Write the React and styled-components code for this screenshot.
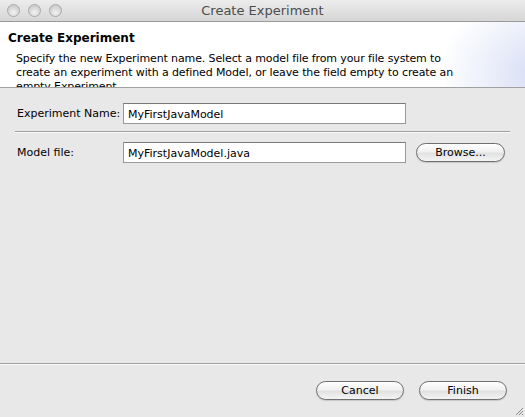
import React from "react";
import styled, { createGlobalStyle } from "styled-components";

const FONT = `"DejaVu Sans", "Liberation Sans", sans-serif`;

const GlobalStyle = createGlobalStyle`
  html, body {
    margin: 0;
    padding: 0;
    background: #e8e8e8;
  }
  body {
    font-family: ${FONT};
    color: #000;
  }
`;

const Window = styled.div`
  width: 525px;
  height: 417px;
  display: flex;
  flex-direction: column;
  background: #e8e8e8;
  overflow: hidden;
  position: relative;
`;

const TitleBar = styled.div`
  height: 21px;
  flex: none;
  display: flex;
  align-items: center;
  position: relative;
  background: linear-gradient(#ececec, #d6d6d6);
  border-bottom: 1px solid #9a9a9a;
`;

const Lights = styled.div`
  display: flex;
  gap: 8px;
  padding-left: 7px;
`;

const Light = styled.span`
  width: 13px;
  height: 13px;
  border-radius: 50%;
  box-sizing: border-box;
  border: 1px solid #a9a9a9;
  background: radial-gradient(circle at 50% 70%, #f2f2f2, #cfcfcf 70%);
`;

const Title = styled.div`
  position: absolute;
  left: 0;
  right: 0;
  text-align: center;
  font-size: 13px;
  color: #4d4d4d;
  top: 3px;
`;

const Header = styled.div`
  height: 66px;
  flex: none;
  background: #fff;
  border-bottom: 1px solid #a0a0a0;
  position: relative;
  overflow: hidden;
  padding: 9px 0 0 8px;
  box-sizing: border-box;
`;

const HeaderArt = styled.div`
  position: absolute;
  right: -60px;
  top: -30px;
  width: 140px;
  height: 150px;
  border-radius: 50%;
  background: radial-gradient(
    ellipse at 80% 55%,
    rgba(200, 210, 240, 0.9),
    rgba(225, 230, 248, 0.6) 45%,
    rgba(255, 255, 255, 0) 75%
  );
`;

const HeaderTitle = styled.div`
  font-size: 12px;
  font-weight: bold;
  line-height: 15px;
  position: relative;
`;

const HeaderText = styled.div`
  margin: 6px 0 0 8px;
  font-size: 11px;
  line-height: 14px;
  letter-spacing: -0.12px;
  white-space: nowrap;
  position: relative;
`;

const Body = styled.div`
  flex: 1;
  display: flex;
  flex-direction: column;
  padding: 15px 15px 0 17px;
`;

const Row = styled.div`
  display: flex;
  align-items: center;
  height: 21px;
`;

const Label = styled.label`
  width: 106px;
  font-size: 11px;
  flex: none;
`;

const Input = styled.input`
  width: 283px;
  height: 21px;
  box-sizing: border-box;
  border: 1px solid #9a9a9a;
  border-top-color: #7a7a7a;
  background: #fff;
  font-family: ${FONT};
  font-size: 11px;
  padding: 1px 4px 0;
  margin: 0;
  outline: none;
`;

const Separator = styled.hr`
  border: none;
  border-top: 1px solid #9d9d9d;
  border-bottom: 1px solid #fafafa;
  margin: ${(p) => p.$margin || "7px 0 9px -2px"};
`;

const PillButton = styled.button`
  height: 19px;
  width: ${(p) => p.$width || 88}px;
  border-radius: 10px;
  border: 1px solid #6f6f6f;
  background: linear-gradient(#ffffff, #f1f1f1 45%, #e2e2e2 55%, #f4f4f4);
  font-family: ${FONT};
  font-size: 11px;
  color: #000;
  padding: 0;
  margin-left: ${(p) => p.$gap || 0}px;
  box-shadow: 0 1px 1px rgba(0, 0, 0, 0.15);
`;

const Footer = styled.div`
  height: 52px;
  flex: none;
  display: flex;
  justify-content: flex-end;
  align-items: flex-start;
  padding: 16px 18px 0 0;
  box-sizing: border-box;
  position: relative;
`;

const Grip = styled.svg`
  position: absolute;
  right: 1px;
  bottom: 1px;
`;

export default function App() {
  return (
    <Window>
      <GlobalStyle />
      <TitleBar>
        <Lights>
          <Light />
          <Light />
          <Light />
        </Lights>
        <Title>Create Experiment</Title>
      </TitleBar>
      <Header>
        <HeaderArt />
        <HeaderTitle>Create Experiment</HeaderTitle>
        <HeaderText>
          Specify the new Experiment name. Select a model file from your file system to
          <br />
          create an experiment with a defined Model, or leave the field empty to create an
          <br />
          empty Experiment.
        </HeaderText>
      </Header>
      <Body>
        <Row>
          <Label>Experiment Name:</Label>
          <Input defaultValue="MyFirstJavaModel" />
        </Row>
        <Separator />
        <Row>
          <Label>Model file:</Label>
          <Input defaultValue="MyFirstJavaModel.java" />
          <PillButton $width={89} $gap={10}>
            Browse...
          </PillButton>
        </Row>
      </Body>
      <Separator $margin="0" />
      <Footer>
        <PillButton $width={88}>Cancel</PillButton>
        <PillButton $width={88} $gap={15}>
          Finish
        </PillButton>
        <Grip width="10" height="10" viewBox="0 0 10 10">
          <path d="M9 2 L2 9 M9 5 L5 9 M9 8 L8 9" stroke="#8a8a8a" strokeWidth="1" />
        </Grip>
      </Footer>
    </Window>
  );
}
